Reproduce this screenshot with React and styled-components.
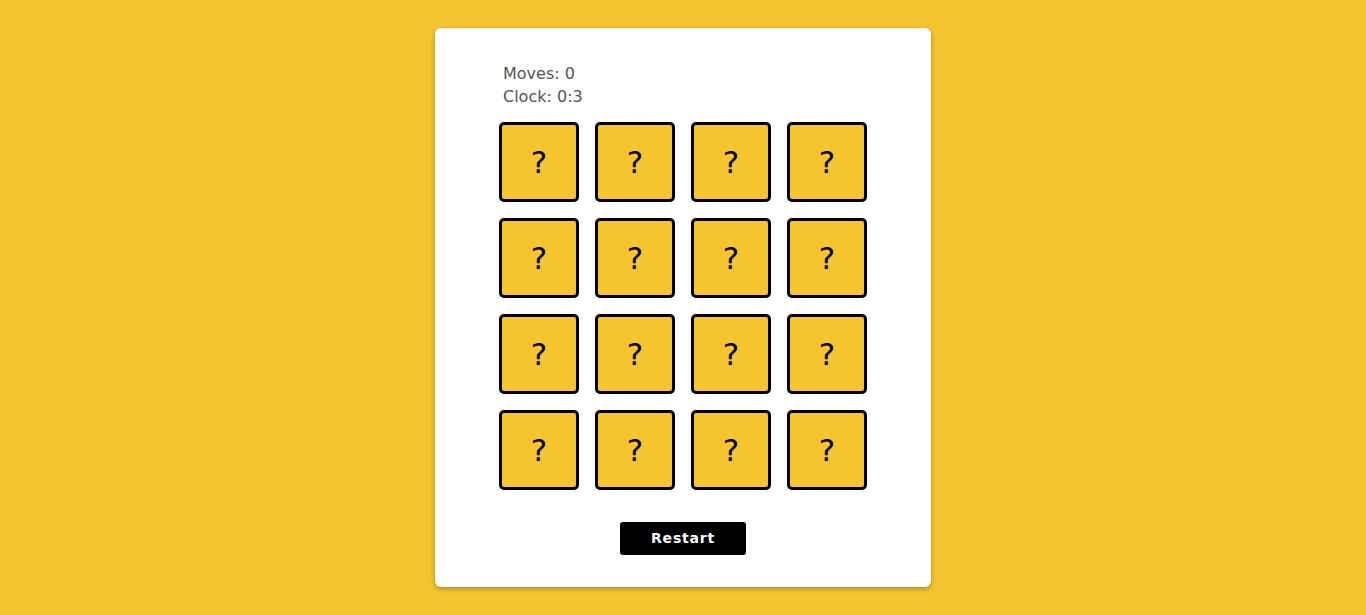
import React from 'react';
import styled, { createGlobalStyle } from 'styled-components';

const GlobalStyle = createGlobalStyle`
    html, body {
        margin: 0;
        padding: 0;
        background: #f4c531;
        font-family: 'DejaVu Sans', sans-serif;
    }
`;

const Page = styled.div`
    display: flex;
    justify-content: center;
    padding-top: 28px;
    min-height: 615px;
    box-sizing: border-box;
`;

const Card = styled.div`
    width: 496px;
    height: 559px;
    box-sizing: border-box;
    background: #ffffff;
    border-radius: 6px;
    box-shadow: 0 2px 5px rgba(0, 0, 0, 0.3);
    padding: 34px 0 32px;
    display: flex;
    flex-direction: column;
    align-items: center;
`;

const Stats = styled.div`
    width: 368px;
    padding-left: 4px;
    box-sizing: border-box;
    color: #555555;
    font-size: 16px;
    line-height: 23px;
`;

const Board = styled.div`
    display: grid;
    grid-template-columns: repeat(4, 80px);
    grid-auto-rows: 80px;
    gap: 16px;
    margin-top: 14px;
`;

const Tile = styled.button`
    box-sizing: border-box;
    width: 80px;
    height: 80px;
    border: 3px solid #000;
    border-radius: 5px;
    background: #f4c531;
    font-family: 'DejaVu Sans', sans-serif;
    font-size: 31px;
    color: #000;
    display: flex;
    align-items: center;
    justify-content: center;
    padding: 0;
    cursor: pointer;
`;

const RestartButton = styled.button`
    margin-top: 32px;
    width: 126px;
    height: 33px;
    border: none;
    border-radius: 3px;
    background: #000;
    color: #fff;
    font-family: 'DejaVu Sans', sans-serif;
    font-weight: bold;
    font-size: 14px;
    letter-spacing: 0.8px;
    line-height: 31px;
    cursor: pointer;
`;

const App = () => {
    const [moves] = React.useState(0);
    const tiles = Array.from({ length: 16 }, (_, i) => i);

    return (
        <>
            <GlobalStyle />
            <Page>
                <Card>
                    <Stats>
                        <div>Moves: {moves}</div>
                        <div>Clock: 0:3</div>
                    </Stats>
                    <Board>
                        {tiles.map((t) => (
                            <Tile key={t} type="button">?</Tile>
                        ))}
                    </Board>
                    <RestartButton type="button">Restart</RestartButton>
                </Card>
            </Page>
        </>
    );
};

export default App;
